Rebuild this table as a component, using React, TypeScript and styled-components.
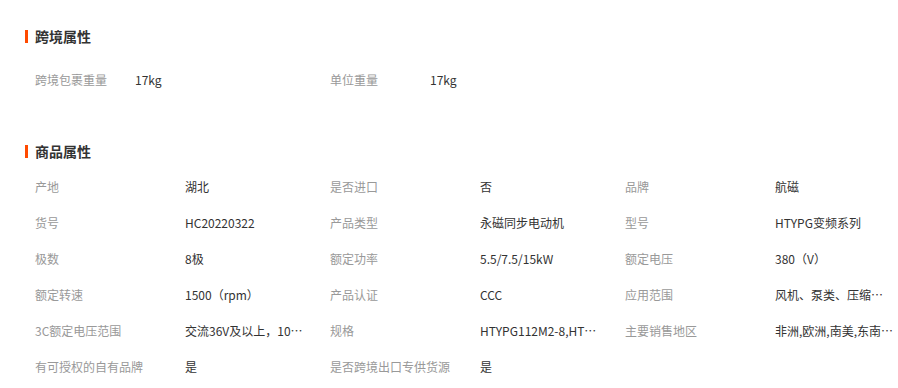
import styled, { createGlobalStyle } from 'styled-components'

const GlobalStyle = createGlobalStyle`
  body {
    margin: 0;
    background: #fff;
    overflow: hidden;
    font-family: "Noto Sans CJK SC", "Liberation Sans", sans-serif;
  }
`

const Page = styled.div`
  width: 898px;
  padding: 26px 0 0 25px;
  box-sizing: border-box;
  overflow: hidden;
`

const Section = styled.section<{ $gap: number }>`
  margin-bottom: ${(p) => p.$gap}px;
`

const Title = styled.h3<{ $after: number }>`
  margin: 0 0 ${(p) => p.$after}px;
  height: 20px;
  line-height: 20px;
  font-size: 14px;
  font-weight: bold;
  color: #333;
  display: flex;
  align-items: center;
  &::before {
    content: '';
    width: 3px;
    height: 13px;
    background: #ff4a00;
    margin-right: 7px;
  }
`

const Row = styled.div`
  display: flex;
  height: 36px;
  align-items: center;
  padding-left: 10px;
`

const Cell = styled.div`
  flex: none;
  width: 295px;
  display: flex;
  align-items: center;
  font-size: 12px;
`

const Label = styled.span<{ $w: number }>`
  width: ${(p) => p.$w}px;
  flex-shrink: 0;
  color: #999;
  white-space: nowrap;
`

const Value = styled.span`
  width: 120px;
  color: #333;
  white-space: nowrap;
  overflow: hidden;
  text-overflow: ellipsis;
`

type Attr = [string, string]

const crossBorder: Attr[][] = [
  [
    ['跨境包裹重量', '17kg'],
    ['单位重量', '17kg'],
  ],
]

const product: Attr[][] = [
  [
    ['产地', '湖北'],
    ['是否进口', '否'],
    ['品牌', '航磁'],
  ],
  [
    ['货号', 'HC20220322'],
    ['产品类型', '永磁同步电动机'],
    ['型号', 'HTYPG变频系列'],
  ],
  [
    ['极数', '8极'],
    ['额定功率', '5.5/7.5/15kW'],
    ['额定电压', '380（V）'],
  ],
  [
    ['额定转速', '1500（rpm）'],
    ['产品认证', 'CCC'],
    ['应用范围', '风机、泵类、压缩机、机床等'],
  ],
  [
    ['3C额定电压范围', '交流36V及以上，1000V以下'],
    ['规格', 'HTYPG112M2-8,HTYPG132M1-8'],
    ['主要销售地区', '非洲,欧洲,南美,东南亚,北美'],
  ],
  [
    ['有可授权的自有品牌', '是'],
    ['是否跨境出口专供货源', '是'],
  ],
]

function AttrTable({ rows, labelWidth }: { rows: Attr[][]; labelWidth: number }) {
  return (
    <>
      {rows.map((row, i) => (
        <Row key={i}>
          {row.map(([k, v]) => (
            <Cell key={k}>
              <Label $w={labelWidth}>{k}</Label>
              <Value>{v}</Value>
            </Cell>
          ))}
        </Row>
      ))}
    </>
  )
}

export default function App() {
  return (
    <Page>
      <GlobalStyle />
      <Section $gap={44}>
        <Title $after={15}>跨境属性</Title>
        <AttrTable rows={crossBorder} labelWidth={100} />
      </Section>
      <Section $gap={0}>
        <Title $after={7}>商品属性</Title>
        <AttrTable rows={product} labelWidth={150} />
      </Section>
    </Page>
  )
}
